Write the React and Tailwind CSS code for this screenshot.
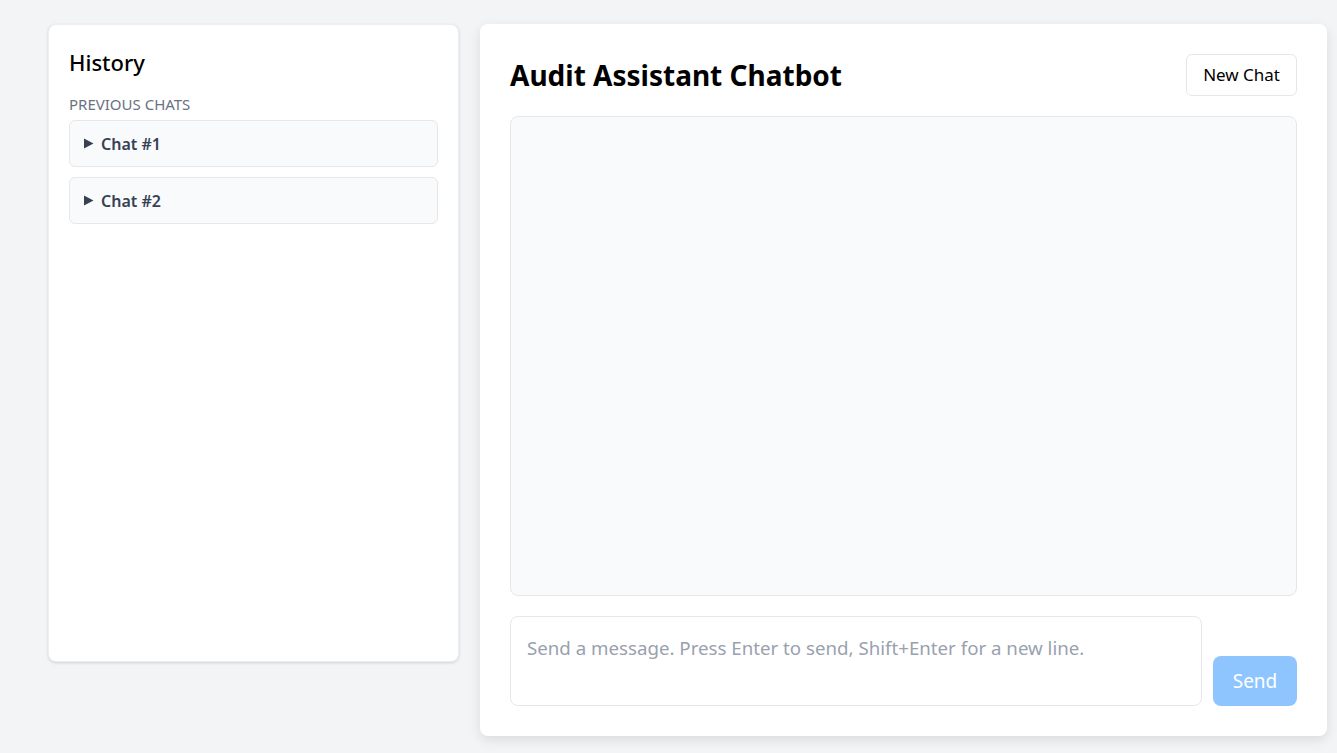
import React from 'react';

const chats = ['Chat #1', 'Chat #2'];

const Caret = () => (
  <svg width="10" height="11" viewBox="0 0 10 11" className="mr-[7px] shrink-0">
    <polygon points="0,0.5 9.5,5.5 0,10.5" fill="#374151" />
  </svg>
);

const HistoryPanel = () => (
  <aside className="w-[411px] h-[638px] shrink-0 bg-white rounded-lg shadow-[0_1px_3px_rgba(0,0,0,0.15)] border border-gray-200/70 px-5 py-5">
    <h2 className="text-[22px] leading-[36px] font-medium text-black mt-[-1px]">History</h2>
    <div className="mt-[14px] text-[15px] leading-[20px] uppercase text-gray-500">Previous Chats</div>
    <div className="mt-[6px] flex flex-col gap-[10px]">
      {chats.map((c) => (
        <div
          key={c}
          className="h-[47px] flex items-center pl-[14px] pr-[15px] bg-gray-50 border border-gray-200 rounded-md text-gray-700 font-semibold text-[16px]"
        >
          <Caret />
          {c}
        </div>
      ))}
    </div>
  </aside>
);

const ChatPanel = () => (
  <main className="w-[847px] bg-white rounded-lg shadow-[0_4px_12px_rgba(0,0,0,0.1)] p-[30px] flex flex-col gap-5">
    <header className="flex items-center justify-between h-[42px]">
      <h1 className="text-[28px] font-bold text-black leading-none">Audit Assistant Chatbot</h1>
      <button className="h-[42px] px-[16px] border border-gray-200 rounded-md bg-white text-[17px] text-black">
        New Chat
      </button>
    </header>
    <div className="h-[480px] bg-gray-50 border border-gray-200 rounded-lg" />
    <div className="flex items-end gap-[11px]">
      <textarea
        className="flex-1 h-[90px] resize-none border border-gray-200 rounded-lg px-4 py-[18px] text-[18.7px] leading-[26px] placeholder:text-gray-400 outline-none"
        placeholder="Send a message. Press Enter to send, Shift+Enter for a new line."
      />
      <button className="w-[84px] h-[50px] rounded-lg bg-blue-300 text-white text-[19px]">Send</button>
    </div>
  </main>
);

export default function App() {
  return (
    <div
      className="min-h-screen bg-gray-100 flex items-start gap-[21px] pl-[48px] pt-[24px]"
      style={{ fontFamily: '"Segoe UI", "Noto Sans", "Open Sans", sans-serif' }}
    >
      <HistoryPanel />
      <ChatPanel />
    </div>
  );
}
